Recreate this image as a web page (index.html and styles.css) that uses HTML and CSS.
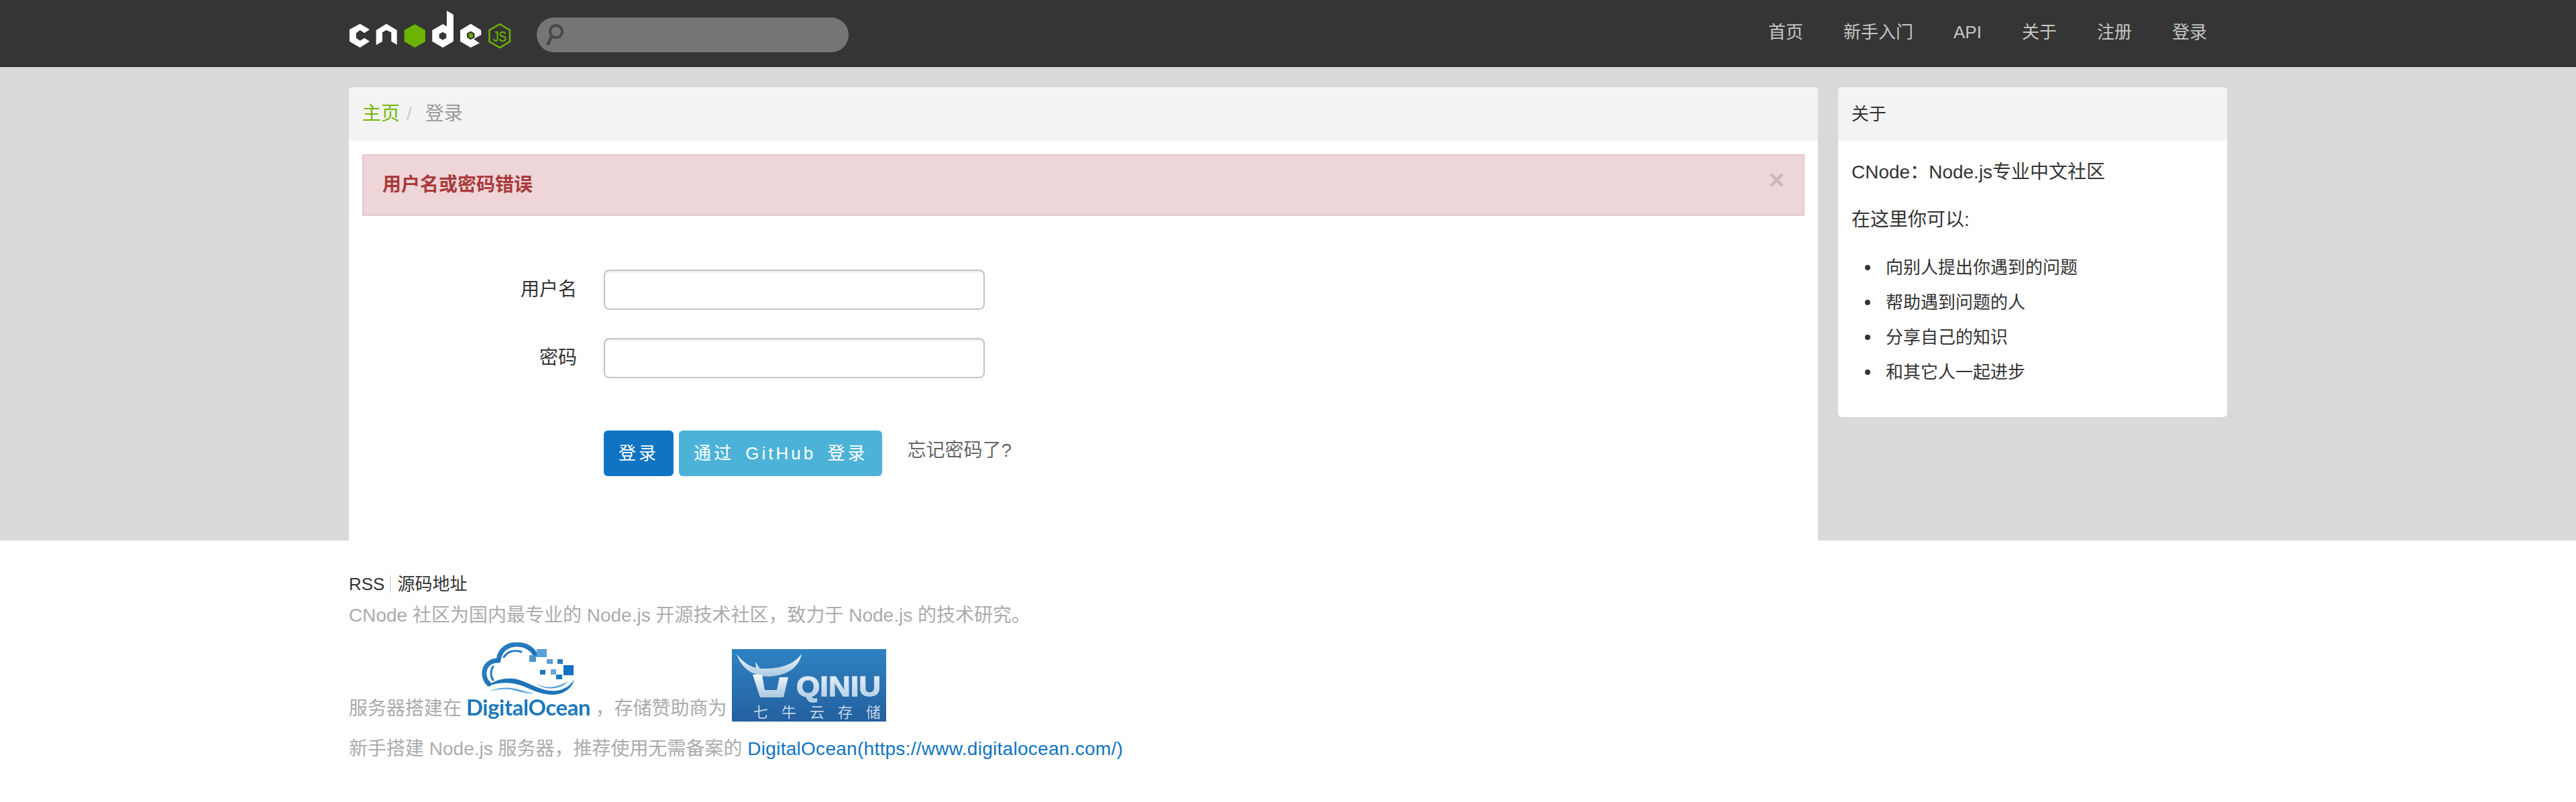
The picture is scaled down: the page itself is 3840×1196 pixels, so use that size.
FILE: index.html
```html
<!DOCTYPE html>
<html lang="zh-CN">
<head>
<meta charset="utf-8">
<title>CNode：Node.js专业中文社区</title>
<link rel="stylesheet" href="styles.css">
</head>
<body>
<header class="navbar">
  <div class="container navbar-inner">
    <a class="brand" href="#">
      <svg class="logo" width="240" height="55" viewBox="0 0 240 55">
        <path class="lw" d="M16.700 19.500 31 28 23.300 33.300 16.700 29 11 33.300V40.700L16.700 44.700 23.300 40.700 31 45.700 16.700 55 1 45.700V28Z"/>
        <path class="lw" d="M56 19.500 71.700 29V50.700L63.300 45.700V32.300L56 29 50 32.300V45.700L40.700 51.300V29Z"/>
        <path class="lg" d="M98.300 20 114 29V46L98.300 55 82.700 46V29Z"/>
        <path class="lw" fill-rule="evenodd" d="M146 0 156 5.700V45.700L140 55 124.300 45.700V29L140 20 146 23.300ZM140 31.700 134.700 34.700V40.700L140 43.700 145.300 40.700V34.700Z"/>
        <path class="lw" fill-rule="evenodd" d="M181.700 19.500 197.300 29V36L186 42.300 195 48.300 181.700 55 166 45.700V29ZM181.700 30.500 176 33.700V40L181.700 43.200 187.400 40V33.700Z"/>
        <path class="lg" d="M181.700 33 185 35V39L181.700 41 178.500 39V35Z"/>
        <path class="ls" d="M225 20 240 29V46L225 55 209.500 46V29Z"/>
        <text class="lt" x="215" y="46" textLength="20" lengthAdjust="spacingAndGlyphs">JS</text>
      </svg>
    </a>
    <form class="search">
      <svg class="search-icon" width="26" height="36" viewBox="0 0 26 36"><circle cx="15" cy="13" r="9"/><path d="M8 21 2 33"/></svg>
    </form>
    <nav class="nav">
      <a href="#">首页</a>
      <a href="#">新手入门</a>
      <a href="#">API</a>
      <a href="#">关于</a>
      <a href="#">注册</a>
      <a href="#">登录</a>
    </nav>
  </div>
</header>

<div class="page">
  <div class="container columns">
    <main class="panel main-panel">
      <div class="panel-head breadcrumb"><a href="#">主页</a><span class="sep">/</span><span class="current">登录</span></div>
      <div class="panel-body main-body">
        <div class="alert"><strong>用户名或密码错误</strong><span class="close">×</span></div>
        <form class="login">
          <div class="row"><label class="row-label" for="name">用户名</label><input id="name" class="field" type="text"></div>
          <div class="row"><label class="row-label" for="pass">密码</label><input id="pass" class="field" type="password"></div>
          <div class="actions">
            <button class="btn btn-primary" type="button">登录</button>
            <button class="btn btn-info" type="button">通过 GitHub 登录</button>
            <a class="forgot" href="#">忘记密码了?</a>
          </div>
        </form>
      </div>
    </main>
    <aside class="panel side-panel">
      <div class="panel-head side-head">关于</div>
      <div class="panel-body side-body">
        <p>CNode：Node.js专业中文社区</p>
        <p>在这里你可以:</p>
        <ul>
          <li>向别人提出你遇到的问题</li>
          <li>帮助遇到问题的人</li>
          <li>分享自己的知识</li>
          <li>和其它人一起进步</li>
        </ul>
      </div>
    </aside>
  </div>
</div>

<footer class="footer">
  <div class="container">
    <div class="footer-links"><a href="#">RSS</a><i class="divider"></i><a href="#">源码地址</a></div>
    <p class="footer-line">CNode 社区为国内最专业的 Node.js 开源技术社区，致力于 Node.js 的技术研究。</p>
    <p class="footer-line sponsors">服务器搭建在
      <svg class="sponsor-do" width="185" height="118" viewBox="0 0 185 118">
        <defs><linearGradient id="doarc" x1="0" y1="0" x2="1" y2="1"><stop offset="0" stop-color="#2a7fc0"/><stop offset="1" stop-color="#1b6db4"/></linearGradient></defs>
        <path class="do-line" stroke-width="7" d="M48 27C50 8 66 2 78 3 90 4 98 9 103 18"/>
        <path class="do-line" stroke-width="3" d="M56 22C62 13 72 11 82 14"/>
        <path class="do-line" stroke-width="7" d="M46 27C32 28 26 38 27 49 28 55 30 59 34 62"/>
        <path class="do-line" stroke-width="3" d="M40 36C36 42 36 50 40 56"/>
        <path class="do-fill" d="M30 66C45 54 65 50 85 58 105 66 120 76 140 71 150 68 157 62 161 55 158 68 146 78 128 78 108 78 95 68 78 63 60 58 45 60 30 66Z"/>
        <path class="do-thin" d="M34 73C50 66 66 66 82 71 90 74 96 75 102 76 88 77 78 72 64 70 52 69 42 71 34 73Z"/>
        <path class="do-thin" d="M103 60C115 68 130 70 152 58 140 72 115 72 103 60Z"/>
        <rect x="105" y="10" width="15" height="12" fill="#5aa0da"/>
        <rect x="94" y="19" width="10" height="10" fill="#4d94cc"/>
        <rect x="120" y="25" width="9" height="7" fill="#5ca0d0"/>
        <rect x="136" y="25" width="8" height="7" fill="#2a7cbc"/>
        <rect x="145" y="34" width="15" height="15" fill="#0f72c4"/>
        <rect x="110" y="41" width="8" height="7" fill="#1a78c0"/>
        <rect x="126" y="40" width="8" height="8" fill="#6aa8d8"/>
        <rect x="134" y="48" width="9" height="7" fill="#1a78c0"/>
        <text class="do-text" x="0" y="109">DigitalOcean</text>
      </svg> ，存储赞助商为
      <svg class="sponsor-qn" width="230" height="108" viewBox="0 0 230 108">
        <defs>
          <linearGradient id="qnbg" x1="0" y1="0" x2="0" y2="1"><stop offset="0" stop-color="#2f82c2"/><stop offset="1" stop-color="#24609f"/></linearGradient>
          <linearGradient id="qnfg" x1="0" y1="0" x2="0" y2="1"><stop offset="0" stop-color="#f4f8fc"/><stop offset="1" stop-color="#a9c8e2"/></linearGradient>
        </defs>
        <rect width="230" height="108" fill="url(#qnbg)"/>
        <path fill="url(#qnfg)" d="M7 7C16 20 28 26 36 28L35 19 42 29C70 30 92 24 104 7 100 28 82 39 56 41 30 41 14 28 7 7Z"/>
        <path fill="url(#qnfg)" d="M31 38H45L49 61H67L71 42H84L77 72H42Z"/>
        <text class="qn-name" x="96" y="70" textLength="126" lengthAdjust="spacingAndGlyphs">QINIU</text>
        <text class="qn-sub" x="32" y="102" textLength="190">七 牛 云 存 储</text>
      </svg>
    </p>
    <p class="footer-line">新手搭建 Node.js 服务器，推荐使用无需备案的 <a class="footer-link" href="#">DigitalOcean(https://www.digitalocean.com/)</a></p>
  </div>
</footer>
</body>
</html>
```
FILE: styles.css
```css
* { box-sizing: border-box; }
html, body { margin: 0; padding: 0; background: #fff; }
body {
  font-family: "Liberation Sans", "Noto Sans CJK SC", sans-serif;
  font-size: 28px;
  line-height: 40px;
  color: #333;
}
a { text-decoration: none; color: inherit; }
.container { width: 2800px; margin: 0 auto; }

.navbar { height: 100px; background: #353535; }
.navbar-inner { display: flex; align-items: flex-start; height: 100%; }
.brand { display: block; width: 240px; height: 55px; margin-top: 16px; }
.logo { display: block; overflow: visible; }
.lw { fill: #fff; }
.lg { fill: #6cb304; }
.ls { fill: none; stroke: #6cb304; stroke-width: 2.500; }
.lt { fill: #6cb304; stroke: #6cb304; stroke-width: .4px; font-size: 22px; font-family: "Liberation Sans", sans-serif; }
.search { display: flex; align-items: center; width: 465px; height: 52px; margin: 26px 0 0 40px; padding-left: 14px; background: #757575; border-radius: 26px; }
.search-icon { display: block; filter: blur(.7px); }
.search-icon circle, .search-icon path { fill: none; stroke: #484848; stroke-width: 4; }
.search-icon path { stroke-width: 5; }
.nav { display: flex; margin-left: auto; margin-top: 28px; font-size: 26px; color: #c6c6c6; }
.nav a { padding: 0 30px; }

.page { background: #d9d9d9; height: 706px; overflow: hidden; padding-top: 30px; }
.columns { display: flex; align-items: flex-start; gap: 30px; }
.panel { background: #fff; border-radius: 6px 6px 0 0; }
.main-panel { width: 2190px; height: 676px; }
.side-panel { width: 580px; border-radius: 6px; }
.panel-head { height: 80px; padding: 0 20px; background: #f3f3f3; border-radius: 6px 6px 0 0; display: flex; align-items: center; }
.breadcrumb { font-size: 28px; }
.breadcrumb a { color: #72b80a; }
.sep { color: #ccc; margin: 0 20px 0 10px; }
.current { color: #999; }
.main-body { padding: 20px; }

.alert { position: relative; height: 92px; padding: 0 28px; background: #eed5d7; border: 2px solid #e8c6cc; line-height: 88px; color: #a93a3c; }
.close { position: absolute; right: 28px; top: 16px; font-size: 40px; line-height: 40px; font-weight: bold; color: #000; opacity: .14; }

.login { padding-top: 80px; }
.row { display: flex; align-items: center; gap: 40px; height: 60px; margin-bottom: 42px; }
.row-label { width: 320px; text-align: right; color: #333; }
.field { width: 568px; height: 60px; background: #fff; border: 2px solid #c4c4c4; border-radius: 8px; box-shadow: inset 0 2px 2px rgba(0,0,0,.075); }
.actions { display: flex; align-items: flex-start; padding: 36px 0 0 360px; }
.btn { height: 68px; padding: 0 22px; border: 0; border-radius: 6px; font: 26px/68px "Liberation Sans", "Noto Sans CJK SC", sans-serif; letter-spacing: 4px; word-spacing: 6px; color: #fff; }
.btn-primary { background: #0f74c2; margin-right: 8px; }
.btn-info { background: #4db2d7; }
.forgot { margin: 10px 0 0 37px; color: #666; }

.side-body { padding: 27px 20px 41px; }
.side-head { font-size: 26px; }
.side-body p { margin: 0 0 31px; }
.side-body ul { margin: -6px 0 0; padding: 0 0 0 20px; list-style: none; }
.side-body li { display: flex; align-items: center; gap: 23px; font-size: 26px; line-height: 52px; }
.side-body li::before { content: ""; width: 8px; height: 8px; border-radius: 50%; background: #333; }

.footer { min-height: 390px; padding: 45px 0 40px; background: #fff; }
.footer-links { display: flex; align-items: center; font-size: 26px; margin-bottom: 7px; color: #333; }
.divider { width: 2px; height: 26px; background: #ddd; margin: 0 9px 0 8px; }
.footer-line { margin: 0 0 20px; color: #ababab; }
.sponsors svg { vertical-align: -10px; }
.sponsor-do, .sponsor-qn { filter: blur(.5px); }
.sponsor-do { margin-left: -1px; }
.do-line { fill: none; stroke: url(#doarc); stroke-linecap: round; }
.do-fill { fill: #1f73b8; }
.do-thin { fill: #5aa5d8; }
.do-text { fill: #1d78bd; font-family: Lato, "Liberation Sans", sans-serif; font-size: 33px; font-weight: 700; letter-spacing: -.5px; }
.qn-name { fill: url(#qnfg); stroke: #c8dcec; stroke-width: 1.400px; font-family: "Liberation Sans", sans-serif; font-weight: bold; font-size: 42px; }
.qn-sub { fill: #c5d8ea; font-family: "Noto Sans CJK SC", sans-serif; font-size: 22px; }
.footer-link { color: #0f74c2; letter-spacing: .28px; }
```
